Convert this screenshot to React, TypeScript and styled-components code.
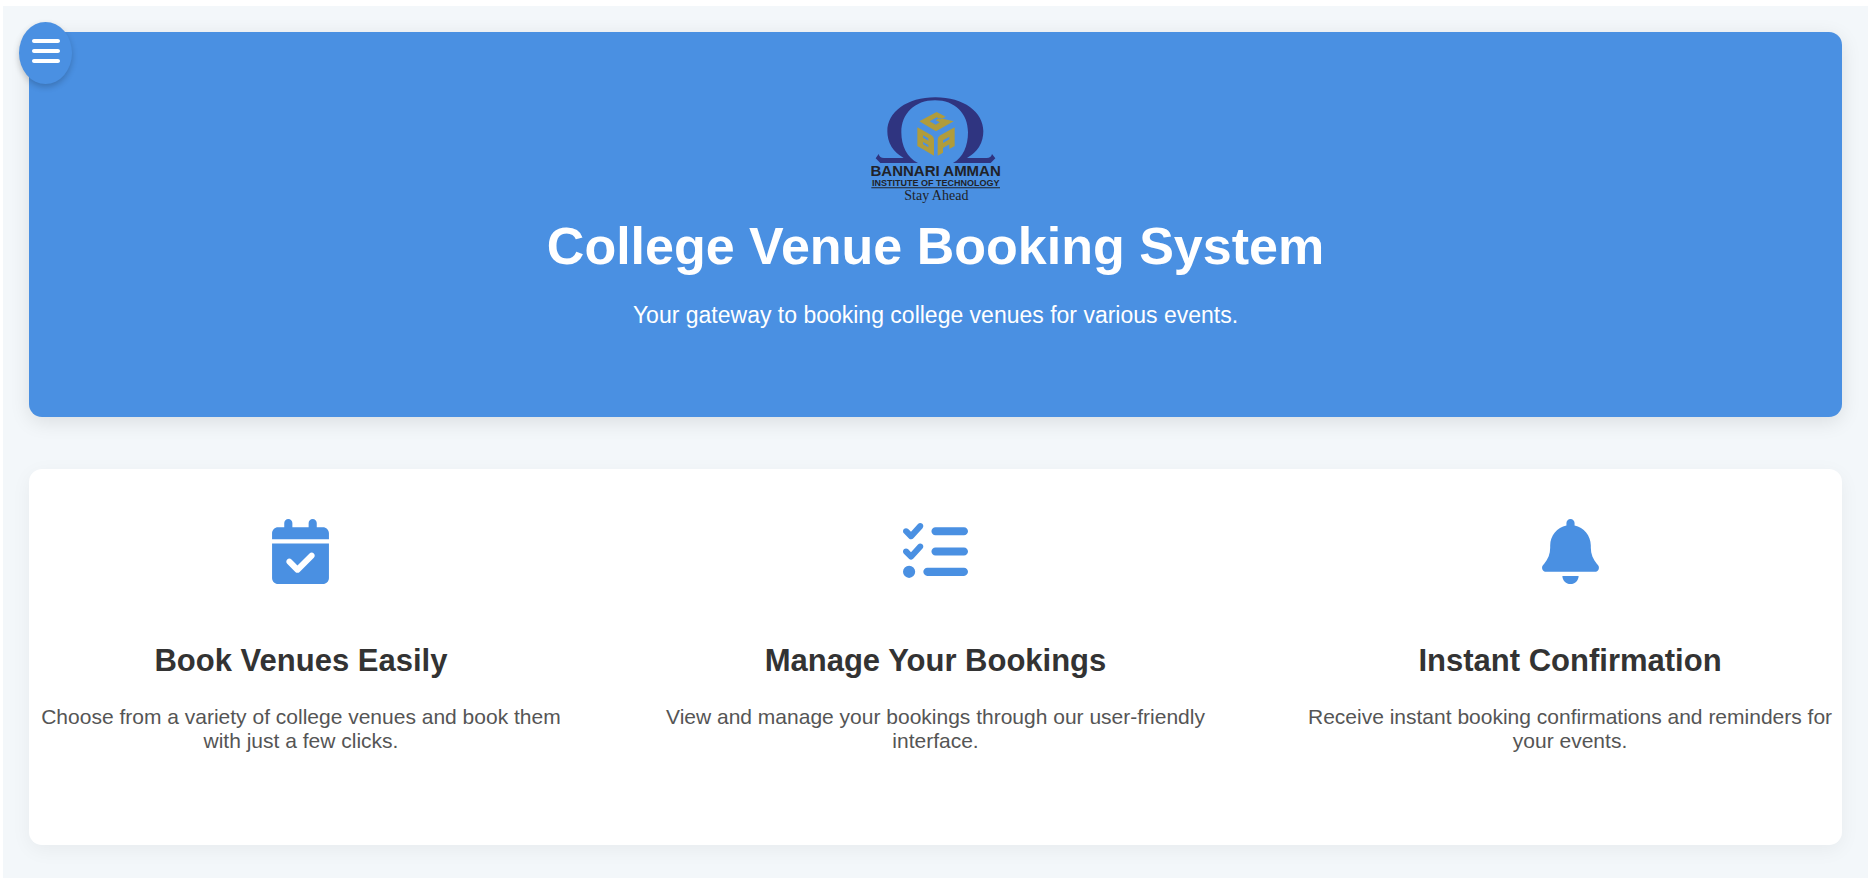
import React from "react";
import styled, { createGlobalStyle } from "styled-components";
import { FaBars, FaBell, FaCalendarCheck, FaListCheck } from "react-icons/fa6";
import type { IconType } from "react-icons";

const GlobalStyle = createGlobalStyle`
  * { box-sizing: border-box; }
  body {
    margin: 0;
    background: #ffffff;
    font-family: Arial, "Liberation Sans", sans-serif;
  }
`;

const Frame = styled.div`
  display: flex;
  min-height: 100vh;
  padding: 6px 7px 0 3px;
`;

const Page = styled.main`
  position: relative;
  flex: 1;
  display: flex;
  flex-direction: column;
  gap: 52px;
  padding: 26px;
  background: #f3f7fa;
`;

const MenuButton = styled.button`
  position: absolute;
  top: 16px;
  left: 16px;
  z-index: 1;
  display: flex;
  justify-content: center;
  width: 53px;
  height: 62px;
  padding: 13px 0;
  border: 0;
  border-radius: 50%;
  background: #4a90e2;
  color: #ffffff;
  font-size: 32px;
  cursor: pointer;
  box-shadow: 0 3px 6px rgba(0, 0, 0, 0.2);
`;

const Hero = styled.header`
  display: flex;
  flex-direction: column;
  align-items: center;
  padding: 65px 26px 89px;
  border-radius: 13px;
  background: #4a90e2;
  color: #ffffff;
  text-align: center;
  box-shadow: 0 5px 20px rgba(0, 0, 0, 0.1);
`;

const LogoArt = styled.svg`
  width: 130px;
  height: 107px;
  margin-bottom: 12px;
`;

const Title = styled.h1`
  margin: 0 0 26px;
  font-size: 52px;
  line-height: 60px;
`;

const Subtitle = styled.p`
  margin: 0;
  font-size: 23px;
  line-height: 26px;
`;

const Features = styled.section`
  display: flex;
  justify-content: space-between;
  padding: 50px 0 92px;
  border-radius: 13px;
  background: #ffffff;
  box-shadow: 0 5px 20px rgba(0, 0, 0, 0.05);
`;

const FeatureItem = styled.article`
  display: flex;
  flex-direction: column;
  align-items: center;
  width: 30%;
  text-align: center;
`;

const FeatureIcon = styled.div`
  display: flex;
  margin-bottom: 59px;
  color: #4a90e2;
  font-size: 65px;
`;

const FeatureTitle = styled.h2`
  margin: 0 0 26px;
  color: #333333;
  font-size: 31px;
  line-height: 36px;
`;

const FeatureText = styled.p`
  margin: 0;
  color: #555555;
  font-size: 21px;
  line-height: 24px;
`;

function Logo() {
  return (
    <LogoArt viewBox="62 50 390 321" role="img" aria-label="Bannari Amman Institute of Technology">
      <path
        fill="#2f3480"
        d="M85 221 Q88 234 103 233 L160 233 Q111 205 111 153 C111 95 170 51 255 51 C340 51 399 95 399 153 Q399 205 350 233 L407 233 Q422 234 425 221 L435 234 L421 248 L308 248 C338 232 353 197 353 156 C353 100 314 60 254 60 C193 60 153 100 153 156 C153 197 170 232 203 248 L90 248 L76 234 Z"
      />
      <g fill="#b09c3c" fillRule="evenodd">
        <path d="M207 123 L259 95 L286 109 L271 117 L259 111 L238 123 L256 133 L268 126 L256 120 L268 113 L310 123 L257 153 Z" />
        <path d="M201 141 L241 163 Q251 169 251 179 V226 L201 197 Z M218 165 V172 L234 181 V174 Z M218 185 V192 L234 201 V194 Z" />
        <path d="M262 178 Q262 170 270 165 L313 141 V197 L297 206 V192 L278 203 V217 L262 226 Z M278 180 V188 L297 177 V169 Z" />
      </g>
      <g fill="#202228" textAnchor="middle">
        <g fontFamily="Arial, 'Liberation Sans', sans-serif" fontWeight="700">
          <text x="256" y="288" fontSize="45">BANNARI AMMAN</text>
          <text x="256" y="316" fontSize="27">INSTITUTE OF TECHNOLOGY</text>
        </g>
        <path d="M63 321 H449 V324 H63 Z" />
        <text x="258" y="360" fontSize="42" fontFamily="'Times New Roman', 'Liberation Serif', serif">
          Stay Ahead
        </text>
      </g>
    </LogoArt>
  );
}

const features: { icon: IconType; title: string; text: string }[] = [
  {
    icon: FaCalendarCheck,
    title: "Book Venues Easily",
    text: "Choose from a variety of college venues and book them with just a few clicks.",
  },
  {
    icon: FaListCheck,
    title: "Manage Your Bookings",
    text: "View and manage your bookings through our user-friendly interface.",
  },
  {
    icon: FaBell,
    title: "Instant Confirmation",
    text: "Receive instant booking confirmations and reminders for your events.",
  },
];

export default function App() {
  return (
    <>
      <GlobalStyle />
      <Frame>
        <Page>
          <MenuButton type="button" aria-label="Open menu">
            <FaBars />
          </MenuButton>
          <Hero>
            <Logo />
            <Title>College Venue Booking System</Title>
            <Subtitle>Your gateway to booking college venues for various events.</Subtitle>
          </Hero>
          <Features>
            {features.map(({ icon: Icon, title, text }) => (
              <FeatureItem key={title}>
                <FeatureIcon>
                  <Icon />
                </FeatureIcon>
                <FeatureTitle>{title}</FeatureTitle>
                <FeatureText>{text}</FeatureText>
              </FeatureItem>
            ))}
          </Features>
        </Page>
      </Frame>
    </>
  );
}
